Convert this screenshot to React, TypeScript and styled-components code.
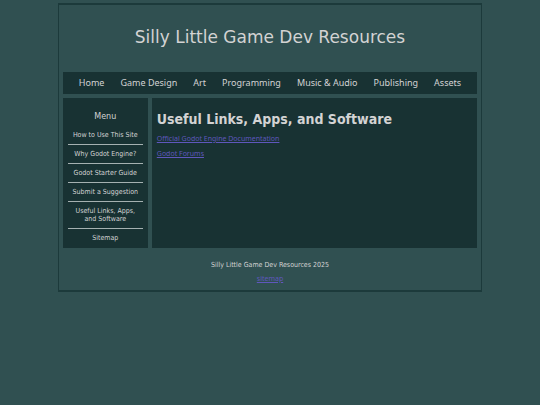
import React from "react";
import styled, { createGlobalStyle } from "styled-components";

const GlobalStyle = createGlobalStyle`
  * {
    box-sizing: border-box;
  }
  body {
    margin: 0;
    background: #305051;
    color: #d3d3d3;
    font-family: "DejaVu Sans Condensed", "DejaVu Sans", Verdana, sans-serif;
    font-size: 7px;
  }
`;

const Wrapper = styled.div`
  width: 78.6%;
  margin: 3px auto 0;
  padding: 4px;
  border: solid #1c3a3b;
  border-width: 2px 1px;
`;

const Header = styled.header`
  padding: 16px 0 23px;
  text-align: center;
`;

const Title = styled.h1`
  margin: 0;
  font-family: "DejaVu Sans", Verdana, sans-serif;
  font-size: 17px;
  line-height: 24px;
  font-weight: 400;
`;

const NavBar = styled.nav`
  display: flex;
  justify-content: space-evenly;
  padding: 5px 0;
  background: #183233;
`;

const NavLink = styled.a`
  color: inherit;
  font-family: "Noto Sans", Verdana, sans-serif;
  font-size: 9px;
  line-height: 12px;
  text-decoration: none;
  white-space: nowrap;
`;

const Columns = styled.div`
  display: grid;
  grid-template-columns: 85px 1fr;
  gap: 4px;
  margin-top: 4px;
`;

const Sidebar = styled.aside`
  padding: 13px 5px 1px;
  background: #183233;
  text-align: center;
`;

const MenuTitle = styled.h2`
  margin: 0 0 3px;
  font-family: "DejaVu Sans", Verdana, sans-serif;
  font-size: 8px;
  line-height: 12px;
  font-weight: 400;
`;

const MenuList = styled.ul`
  margin: 0;
  padding: 0;
  list-style: none;
`;

const MenuItem = styled.li`
  padding: 5px 3px;
  line-height: 8px;

  & + & {
    border-top: 1px solid #a5b1b1;
  }
`;

const MenuLink = styled.a`
  color: inherit;
  text-decoration: none;
`;

const Main = styled.main`
  padding: 12px 5px;
  background: #183233;
`;

const PageTitle = styled.h2`
  margin: 0 0 7px;
  font-size: 14px;
  line-height: 18px;
  font-weight: 700;
`;

const Paragraph = styled.p`
  margin: 0 0 7px;
  line-height: 8px;
`;

const TextLink = styled.a`
  color: #5f57bd;
  font-family: "Noto Sans", Verdana, sans-serif;
`;

const Footer = styled.footer`
  display: grid;
  gap: 6px;
  padding: 13px 0 3px;
  text-align: center;

  ${Paragraph} {
    margin: 0;
  }
`;

const sections = [
  "Home",
  "Game Design",
  "Art",
  "Programming",
  "Music & Audio",
  "Publishing",
  "Assets",
];

const menu = [
  "How to Use This Site",
  "Why Godot Engine?",
  "Godot Starter Guide",
  "Submit a Suggestion",
  "Useful Links, Apps, and Software",
  "Sitemap",
];

const resources = ["Official Godot Engine Documentation", "Godot Forums"];

export default function App() {
  return (
    <>
      <GlobalStyle />
      <Wrapper>
        <Header>
          <Title>Silly Little Game Dev Resources</Title>
        </Header>
        <NavBar>
          {sections.map((name) => (
            <NavLink href="#" key={name}>
              {name}
            </NavLink>
          ))}
        </NavBar>
        <Columns>
          <Sidebar>
            <MenuTitle>Menu</MenuTitle>
            <MenuList>
              {menu.map((name) => (
                <MenuItem key={name}>
                  <MenuLink href="#">{name}</MenuLink>
                </MenuItem>
              ))}
            </MenuList>
          </Sidebar>
          <Main>
            <PageTitle>Useful Links, Apps, and Software</PageTitle>
            {resources.map((name) => (
              <Paragraph key={name}>
                <TextLink href="#">{name}</TextLink>
              </Paragraph>
            ))}
          </Main>
        </Columns>
        <Footer>
          <Paragraph>Silly Little Game Dev Resources 2025</Paragraph>
          <Paragraph>
            <TextLink href="#">sitemap</TextLink>
          </Paragraph>
        </Footer>
      </Wrapper>
    </>
  );
}
